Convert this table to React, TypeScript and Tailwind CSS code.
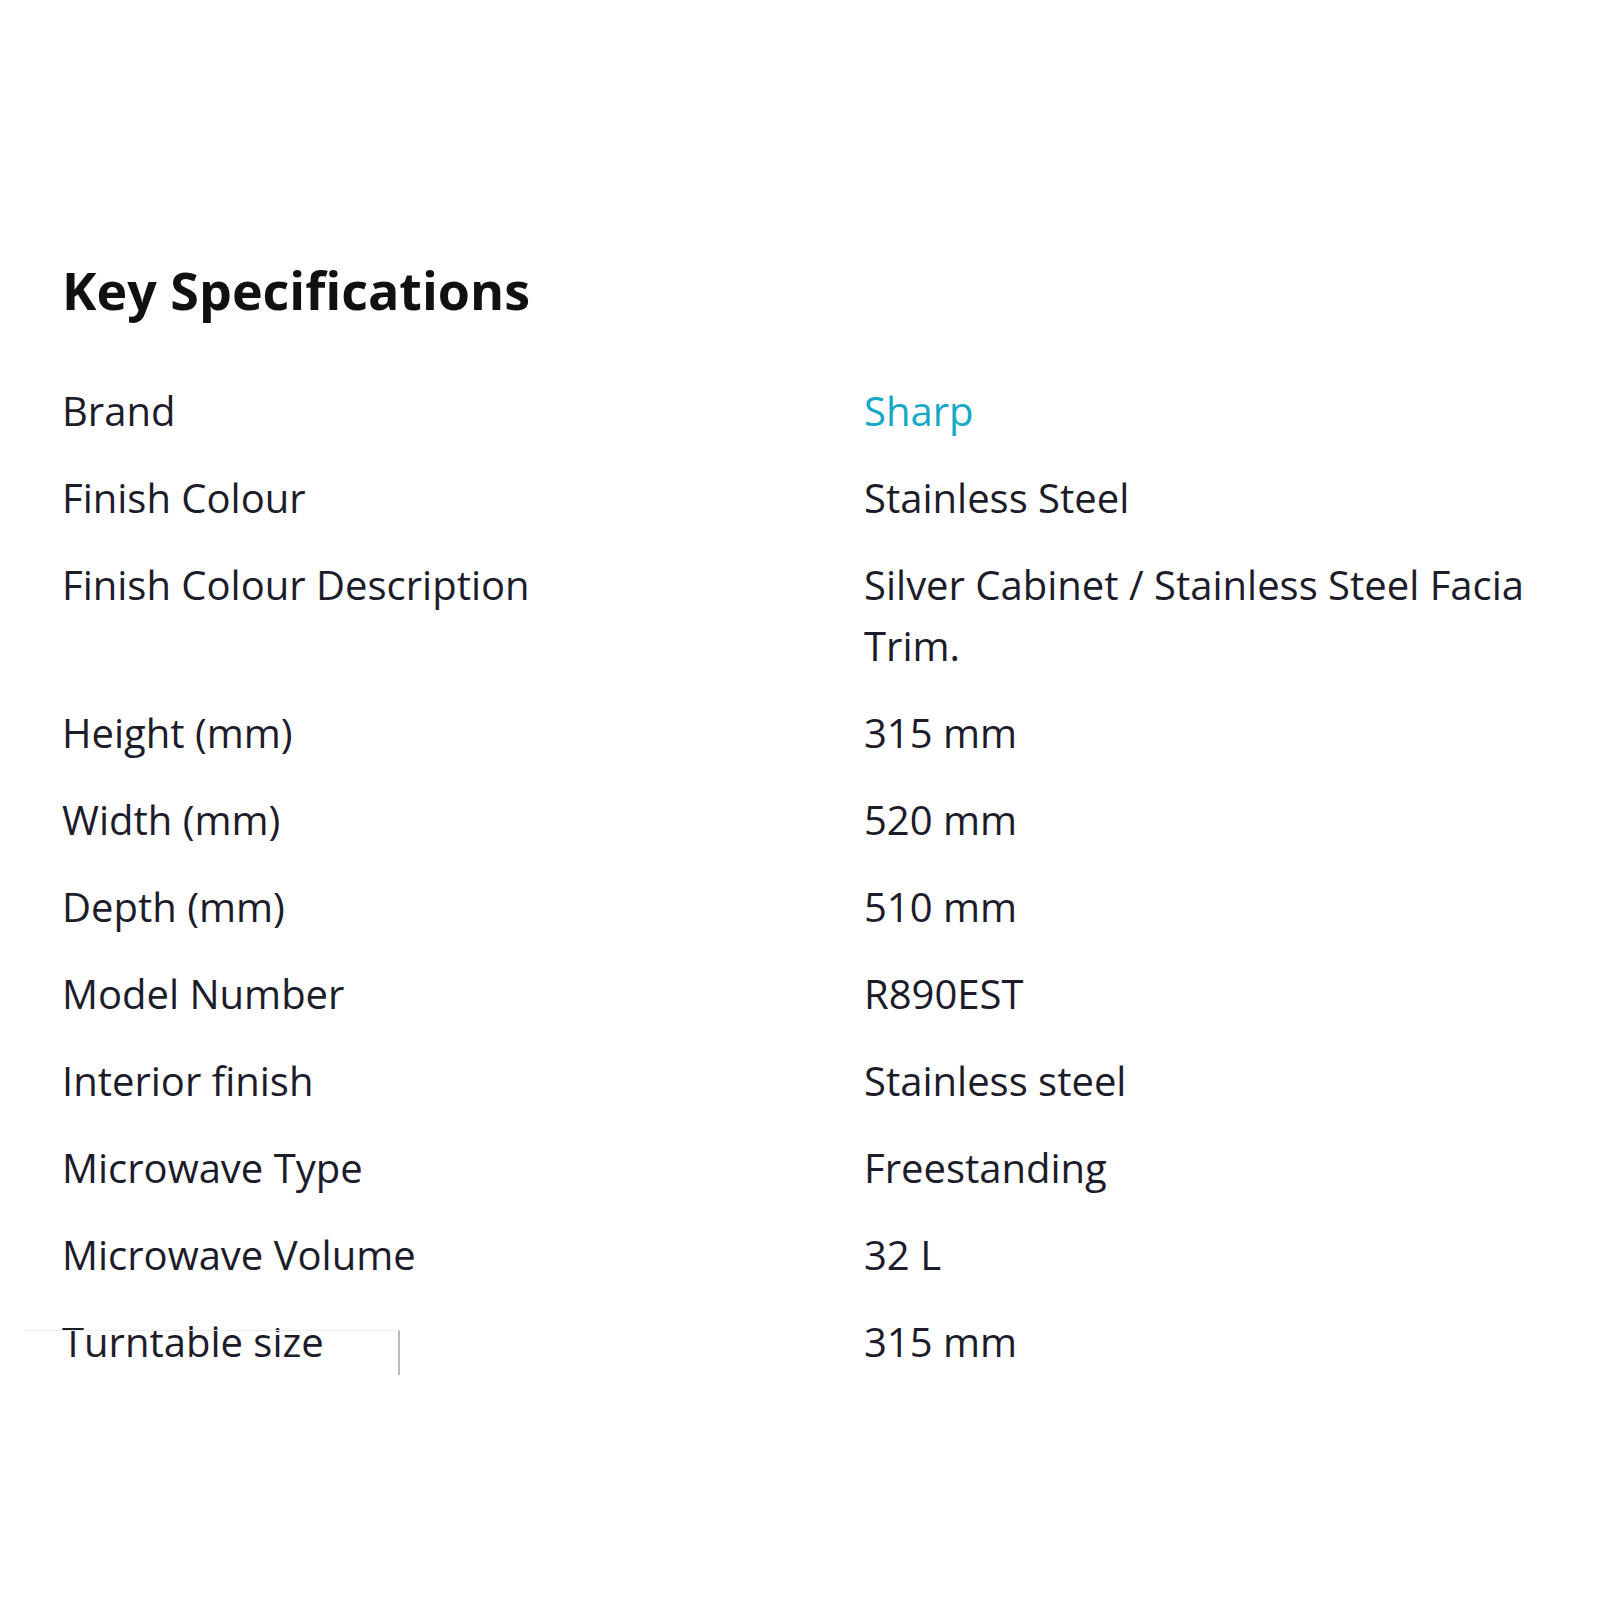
const specs: { label: string; value: string; link?: boolean }[] = [
  { label: 'Brand', value: 'Sharp', link: true },
  { label: 'Finish Colour', value: 'Stainless Steel' },
  { label: 'Finish Colour Description', value: 'Silver Cabinet / Stainless Steel Facia Trim.' },
  { label: 'Height (mm)', value: '315 mm' },
  { label: 'Width (mm)', value: '520 mm' },
  { label: 'Depth (mm)', value: '510 mm' },
  { label: 'Model Number', value: 'R890EST' },
  { label: 'Interior finish', value: 'Stainless steel' },
  { label: 'Microwave Type', value: 'Freestanding' },
  { label: 'Microwave Volume', value: '32 L' },
  { label: 'Turntable size', value: '315 mm' },
]

export default function App() {
  return (
    <div className="relative w-[1600px] h-[1600px] bg-white font-['Open_Sans',sans-serif] text-[#1c1c2b]">
      <div className="pl-[62px] pr-[30px] pt-[258px]">
        <h2 className="text-[52px] font-bold leading-[64px] text-[#111]">Key Specifications</h2>
        <div className="mt-[45px] grid grid-cols-[802px_1fr]">
          {specs.map(s => (
            <div key={s.label} className="contents">
              <div className="py-[13px] text-[40px] leading-[61px]">{s.label}</div>
              <div className={`py-[13px] text-[40px] leading-[61px] ${s.link ? 'text-[#15a8c8]' : ''}`}>
                {s.value}
              </div>
            </div>
          ))}
        </div>
      </div>
      {/* stray box edge over the last row */}
      <div className="absolute left-[25px] top-[1330px] w-[375px] h-[45px] border-t border-t-[#eee] border-r-2 border-r-[#bbb]" />
    </div>
  )
}
